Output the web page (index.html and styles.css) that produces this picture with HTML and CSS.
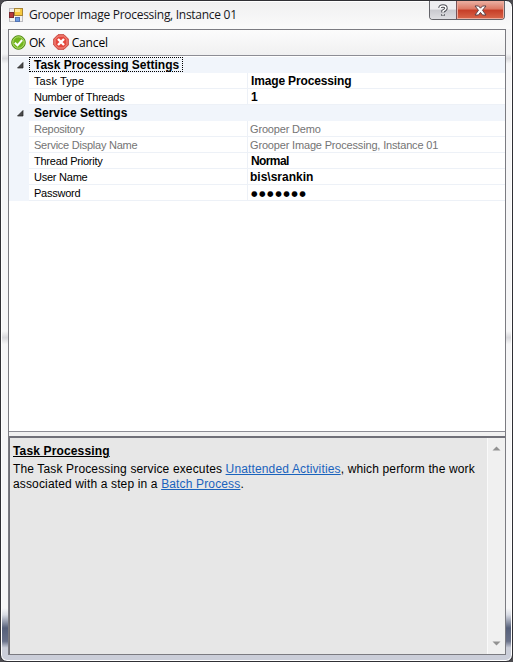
FILE: index.html
```html
<!DOCTYPE html>
<html lang="en">
<head>
<meta charset="utf-8">
<title>Grooper Image Processing, Instance 01</title>
<link rel="stylesheet" href="styles.css">
</head>
<body>
<main class="window">
  <header class="titlebar">
    <svg class="app-icon" width="14" height="14" viewBox="0 0 14 14">
      <rect x=".5" y=".5" width="13" height="13" fill="#f4f2ee" stroke="#bcbcc0"/>
      <rect x="5.500" y=".5" width="8" height="7" fill="#f6c93f" stroke="#a88535"/>
      <rect x="6" y="1" width="5" height="3" fill="#ffe89a"/>
      <rect x=".5" y="4.500" width="4" height="5" fill="#b8393a" stroke="#7c2b30"/>
      <rect x="6.500" y="9.500" width="4" height="4" fill="#6d9be0" stroke="#5475b5"/>
    </svg>
    <h1 class="title">Grooper Image Processing, Instance 01</h1>
    <div class="controls">
      <button class="control help-btn" aria-label="Help"><svg width="12" height="13" viewBox="0 0 12 13"><path d="M3 4Q3 2 6 2Q9 2 9 4.200Q9 5.500 6 7.200V8.500M6 10V12" fill="none" stroke="#4d4f57" stroke-width="3.400"/><path d="M3 4Q3 2 6 2Q9 2 9 4.200Q9 5.500 6 7.200V8.500M6 10V11.500" fill="none" stroke="#fff" stroke-width="1.500"/></svg></button>
      <button class="control close-btn" aria-label="Close"><svg width="13" height="11" viewBox="0 0 13 11"><path d="M1 1H4.500L6.500 3.200L8.500 1H12L8.500 5.300L12 10H8.500L6.500 7.400L4.500 10H1L4.500 5.300Z" fill="#fff" stroke="#5b4248"/></svg></button>
    </div>
  </header>
  <section class="client">
    <nav class="toolbar">
      <button class="tool"><svg width="15" height="15" viewBox="0 0 15 15"><circle cx="7.500" cy="7.500" r="6.800" fill="#72b51c" stroke="#4c8710"/><circle cx="7.500" cy="7.500" r="5.700" fill="none" stroke="#b9de77"/><path d="M3.800 7.700L6.500 10.300L11.200 5" fill="none" stroke="#fff" stroke-width="2"/></svg><span class="ok-text">OK</span></button>
      <button class="tool"><svg width="16" height="16" viewBox="0 0 16 16"><path d="M5 .7H11L15.300 5V11L11 15.300H5L.7 11V5Z" fill="#e4473c" stroke="#c84a42"/><path d="M5.400 2H10.600L14 5.400V10.600L10.600 14H5.400L2 10.600V5.400Z" fill="none" stroke="#f29a90"/><path d="M5 5L11 11M11 5L5 11" stroke="#fff" stroke-width="2.400"/></svg><span class="cancel-text">Cancel</span></button>
    </nav>
    <section class="grid">
      <div class="row category"><svg class="arrow" width="7" height="7"><path d="M6 .5V6H.5Z" fill="#4c4c4c" stroke="#222" stroke-width=".7"/></svg><span class="name focused">Task Processing Settings</span></div>
      <div class="row"><span class="name type">Task Type</span><span class="value strong">Image Processing</span></div>
      <div class="row"><span class="name">Number of Threads</span><span class="value strong">1</span></div>
      <div class="row category"><svg class="arrow" width="7" height="7"><path d="M6 .5V6H.5Z" fill="#4c4c4c" stroke="#222" stroke-width=".7"/></svg><span class="name">Service Settings</span></div>
      <div class="row readonly"><span class="name">Repository</span><span class="value">Grooper Demo</span></div>
      <div class="row readonly"><span class="name">Service Display Name</span><span class="value">Grooper Image Processing, Instance 01</span></div>
      <div class="row"><span class="name">Thread Priority</span><span class="value strong normal">Normal</span></div>
      <div class="row"><span class="name">User Name</span><span class="value strong user">bis\srankin</span></div>
      <div class="row"><span class="name">Password</span><span class="value password">●●●●●●●</span></div>
    </section>
    <section class="help">
      <article class="help-text">
        <h2>Task Processing</h2>
        <p>The Task Processing service executes <a>Unattended Activities</a>, which perform the work</p>
        <p>associated with a step in a <a>Batch Process</a>.</p>
      </article>
      <div class="scrollbar">
        <svg width="9" height="5"><path d="M.5 4.500L4.500 .5L8.500 4.500Z" fill="#929292"/></svg>
        <svg width="9" height="5"><path d="M.5 .5L4.500 4.500L8.500 .5Z" fill="#929292"/></svg>
      </div>
    </section>
  </section>
</main>
</body>
</html>
```
FILE: styles.css
```css
* { box-sizing: border-box; }
body { margin: 0; background: #4c4b50; overflow: hidden; }
button { border: 0; padding: 0; background: none; font: inherit; color: inherit; }
svg { display: block; flex: none; }
.window {
  width: 513px; height: 662px; padding: 0 6px 6px 7px;
  border: 1px solid #303035; border-radius: 7px;
  background:
    linear-gradient(#f0f0f1, #fafafa 28px, transparent 28px),
    linear-gradient(#f4f4f5 0 8%, #dadadd 8.700%, #f6f6f7 9.500% 50%, #d8d8dc 51%, #f6f6f7 52% 92%, #d8dbe4 93%, #56607a 95%, #697189 97%, #cbced9 98%);
  box-shadow: inset 0 0 0 1px #fff;
}
.titlebar { display: flex; height: 28px; align-items: center; }
.app-icon { margin: 0 0 0 1px; }
.title { margin: 0 0 1px 6px; font: 12px "Open Sans", sans-serif; letter-spacing: -.28px; color: #17171b; white-space: nowrap; }
.controls { display: flex; align-self: flex-start; margin: 0 1px 0 auto; height: 19px; border: 1px solid #636369; border-top: 0; border-radius: 0 0 4px 4px; overflow: hidden; }
.control { display: grid; place-items: center; height: 18px; }
.help-btn { width: 27px; background: linear-gradient(#eeeef1 45%, #c9c9cf 50%, #dedee2); border-right: 1px solid #76545a; }
.close-btn { width: 47px; background: linear-gradient(#eab1a4, #dc7762 45%, #c63d27 50%, #d9674b); box-shadow: inset 0 0 0 1px #edaa9b; }
.client { display: flex; flex-direction: column; width: 498px; height: 626px; border: 1px solid #7b7b81; background: #f1f1f1; }
.toolbar { display: flex; align-items: center; gap: 8px; height: 25px; padding: 0 0 1px 2px; background: linear-gradient(#fcfcfc, #f0f0f1); font: 12px "Open Sans", sans-serif; }
.tool { display: flex; align-items: center; gap: 3px; height: 24px; }
.ok-text { letter-spacing: -.5px; }
.cancel-text { letter-spacing: -.15px; }
.grid { height: 377px; padding-top: 1px; border: solid #8d8d95; border-width: 1px 0; background: #fff; font: 11px "Liberation Sans", sans-serif; }
.row { display: flex; height: 16px; padding-left: 20px; background: linear-gradient(90deg, #f1f5fb 20px, #fff 20px); color: #000; line-height: 15px; white-space: nowrap; }
.name { width: 219px; padding: 1px 0 0 5px; border-right: 1px solid #edf1f7; border-bottom: 1px solid #edf1f7; letter-spacing: -.24px; }
.type { letter-spacing: .1px; }
.value { flex: 1; padding: 1px 0 0 2px; border-bottom: 1px solid #edf1f7; letter-spacing: -.17px; }
.readonly { color: #747474; }
.category { padding-left: 8px; background: #f1f5fb; }
.category .name { width: auto; height: 15px; margin-left: 5px; padding: 0 0 0 4px; border: 1px solid transparent; line-height: 14px; font-size: 12px; font-weight: bold; letter-spacing: 0; }
.arrow { margin-top: 5px; }
.category .focused { width: 154px; border: 1px dotted #000; }
.strong { padding: 0 0 0 3px; line-height: 16px; font-size: 12px; font-weight: bold; letter-spacing: -.15px; }
.normal { letter-spacing: -.6px; }
.user { padding-left: 2px; letter-spacing: 0; }
.password { padding-left: 3px; font-family: "DejaVu Sans", sans-serif; font-size: 7.500px; letter-spacing: 1.5px; }
.help { display: flex; flex: 1; margin-top: 4px; border: solid #707078; border-width: 2px 0 0 1px; background: #e7e7e7; }
.help-text { flex: 1; padding: 6px 0 0 3px; font: 12px/15px "Liberation Sans", sans-serif; letter-spacing: .145px; color: #000; white-space: nowrap; }
.help-text h2 { margin: 0 0 3px; font-size: 12px; line-height: 15px; text-decoration: underline; }
.help-text p { margin: 0; }
.help-text a { color: #1a63bd; text-decoration: underline; }
.scrollbar { display: flex; flex-direction: column; justify-content: space-between; align-items: center; width: 18px; padding: 8px 0; border-left: 1px solid #fafafa; background: #f0f0f0; }
```
